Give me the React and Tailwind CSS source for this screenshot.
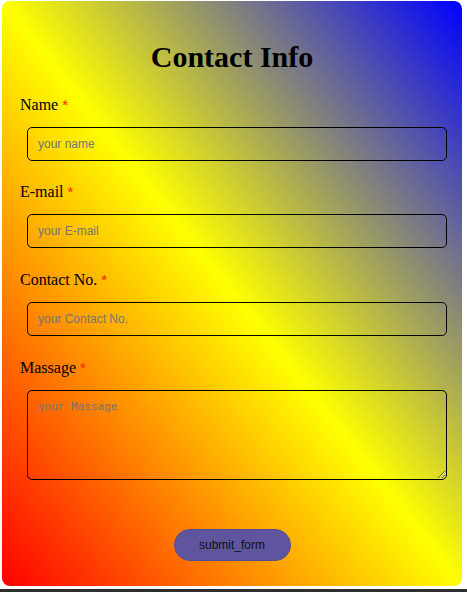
import React from 'react';

const serif = "font-['Liberation_Serif',serif]";

const Field = ({ label, placeholder, textarea, className = '' }) => (
  <div className={`flex flex-col ${className}`}>
    <label className={`${serif} text-[16px] leading-[18px] text-black`}>
      {label}{' '}
      <span className="text-[15px] text-[#ff1a00] font-['Liberation_Sans',sans-serif]">*</span>
    </label>
    {textarea ? (
      <textarea
        placeholder={placeholder}
        className="mt-[13px] ml-[7px] w-[420px] h-[90px] rounded-[5px] border border-black bg-transparent px-[10px] pt-[8px] text-[11px] font-['DejaVu_Sans_Mono',monospace] placeholder:text-[#757575] outline-none"
      />
    ) : (
      <input
        type="text"
        placeholder={placeholder}
        className="mt-[13px] ml-[7px] w-[420px] h-[34px] rounded-[5px] border border-black bg-transparent px-[10px] text-[12px] font-['Liberation_Sans',sans-serif] placeholder:text-[#757575] outline-none"
      />
    )}
  </div>
);

export default function App() {
  return (
    <div className="min-h-screen bg-white">
      <form
        onSubmit={(e) => e.preventDefault()}
        className="ml-[2px] pt-[1px] w-[460px]"
      >
        <div className="rounded-[8px] bg-[linear-gradient(to_top_right,red,yellow,blue)] px-[18px] pt-[39px] pb-[25px]">
          <h1 className={`${serif} text-center text-[30px] leading-[34px] font-bold text-black`}>
            Contact Info
          </h1>
          <div className="mt-[22px] flex flex-col">
            <Field label="Name" placeholder="your name" />
            <Field label="E-mail" placeholder="your E-mail" className="mt-[22px]" />
            <Field label="Contact No." placeholder="your Contact No." className="mt-[23px]" />
            <Field label="Massage" placeholder="your Massage" textarea className="mt-[23px]" />
          </div>
          <div className="mt-[49px] flex justify-center">
            <button
              type="submit"
              className="w-[117px] h-[32px] rounded-full bg-[#5e559e] border border-[#544c90] text-[12px] text-[#111] font-['Liberation_Sans',sans-serif]"
            >
              submit_form
            </button>
          </div>
        </div>
      </form>
      <div className="mt-[3px] h-[3px] bg-[#2e2e2e]" />
    </div>
  );
}
